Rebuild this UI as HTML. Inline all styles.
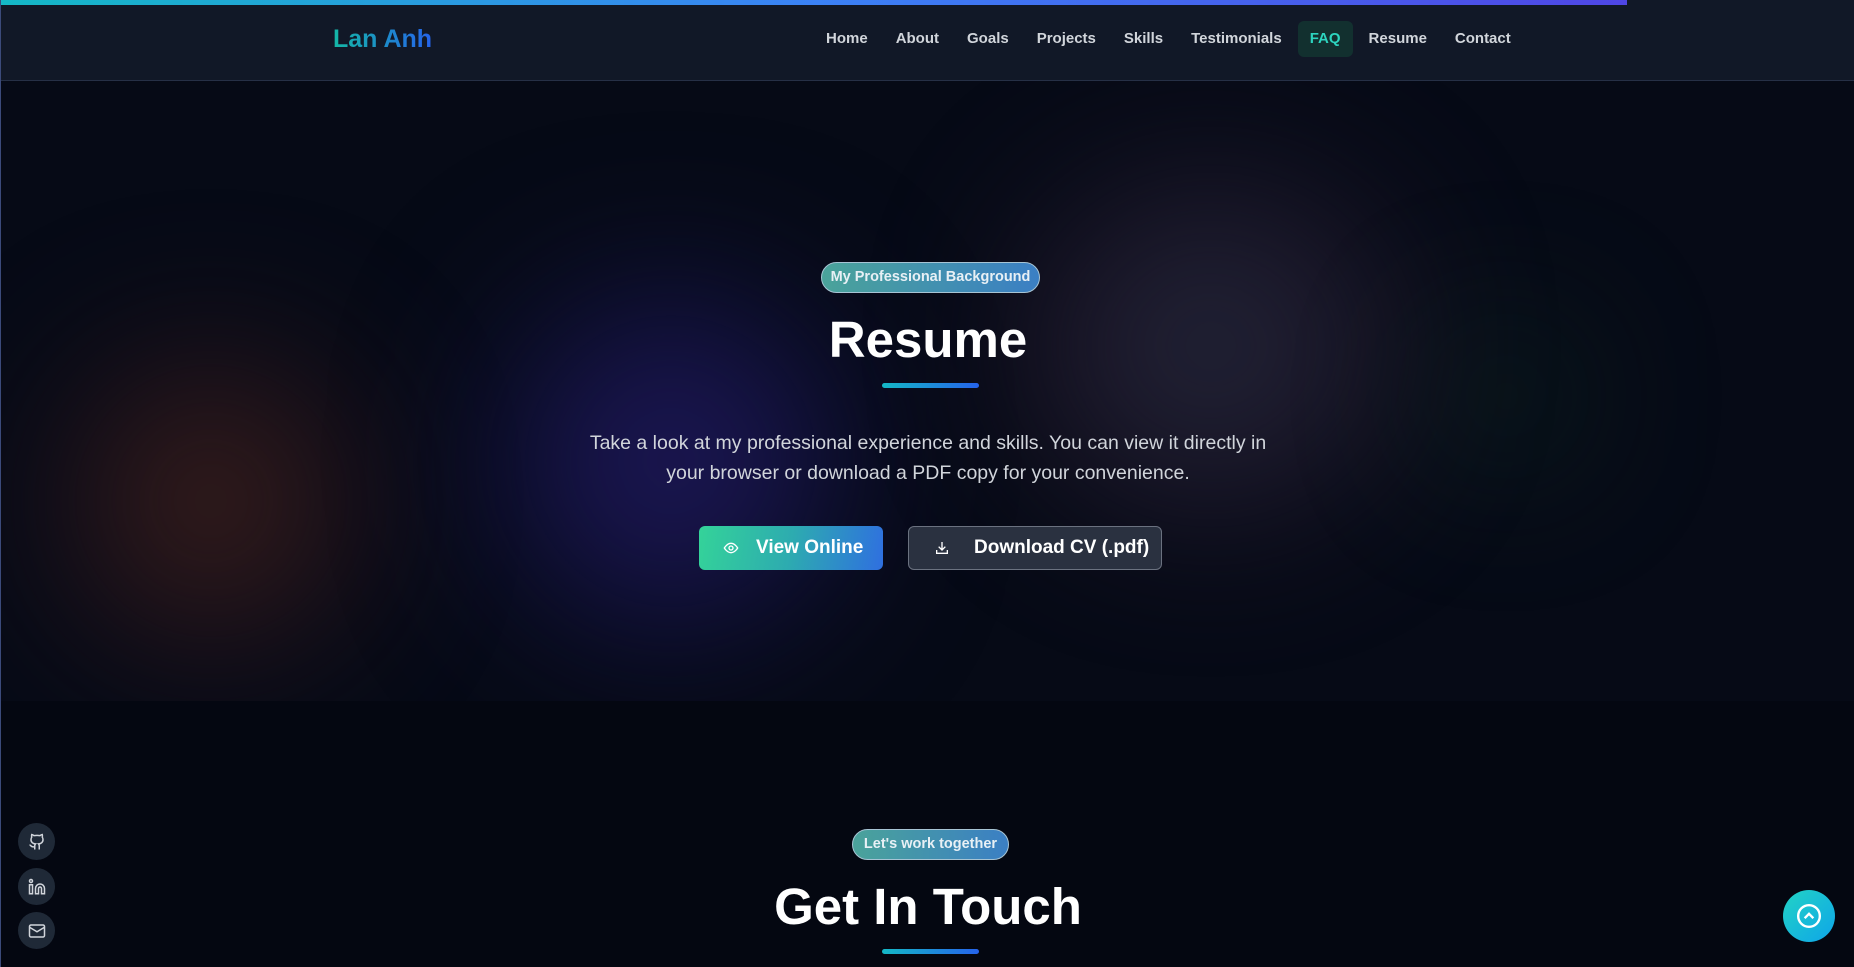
<!DOCTYPE html>
<html><head><meta charset="utf-8"><style>
*{margin:0;padding:0;box-sizing:border-box}
body{width:1854px;height:967px;overflow:hidden;background:#040711;font-family:"Liberation Sans",sans-serif;position:relative;border-left:1px solid #3b4a7a}
.topbar{position:absolute;left:0;top:0;width:1626px;height:5px;background:linear-gradient(90deg,#14b8c6,#3b82f6,#4f46e5);z-index:5}
nav{position:absolute;left:0;top:0;width:1854px;height:81px;background:#111827;border-bottom:1px solid #263046;z-index:4}
.logo{position:absolute;left:332px;top:25px;font-size:25px;font-weight:700;background:linear-gradient(90deg,#14b8a6,#2563eb);-webkit-background-clip:text;color:transparent}
.links{position:absolute;top:21px;left:811px;display:flex;height:36px;align-items:center}
.links a{color:#d1d5db;font-size:15px;font-weight:700;padding:0 14px;height:36px;line-height:36px;border-radius:6px;text-decoration:none}
.links a.act{background:#12302f;color:#2dd4bf;padding:0 12px;margin:0 2px}
.hero{position:absolute;left:0;top:81px;width:1854px;height:620px;overflow:hidden}
.blob{position:absolute;border-radius:50%;filter:blur(80px)}
.badge{position:absolute;height:31px;border:1px solid #a7c4d4;border-radius:16px;background:linear-gradient(90deg,#4aa39a,#3b7fc4);color:#e8f0f5;font-size:14.5px;font-weight:700;text-align:center;line-height:29px}
h1{position:absolute;width:1854px;left:0;text-align:center;color:#fff;font-size:51px;font-weight:700}
.ul{position:absolute;left:881px;width:97px;height:5px;border-radius:3px;background:linear-gradient(90deg,#14b8c6,#2563eb)}
p{position:absolute;left:0;width:1854px;top:428px;text-align:center;color:#d1d5db;font-size:19.5px;line-height:30px}
.btn{position:absolute;top:526px;height:44px;border-radius:6px;font-size:19px;font-weight:700;color:#fff;display:flex;align-items:center}
.soc{position:absolute;left:17px;width:37px;height:37px;border-radius:50%;background:#1f2937;display:flex;align-items:center;justify-content:center}
</style></head><body>
<div class="hero">
<div style="position:absolute;left:0;top:0;width:1854px;height:620px;background:#060a16"></div>
<div class="blob" style="left:60px;top:270px;width:300px;height:300px;background:radial-gradient(circle,#4a2a14,#2a1420 60%,transparent);opacity:.9"></div>
<div class="blob" style="left:500px;top:210px;width:340px;height:340px;background:radial-gradient(circle,#221a5a,#15134a 60%,transparent)"></div>
<div class="blob" style="left:1020px;top:100px;width:380px;height:330px;background:radial-gradient(circle,#1a2e3e,#2a1a30 60%,transparent);opacity:.9"></div>
<div class="blob" style="left:1430px;top:240px;width:150px;height:150px;background:radial-gradient(circle,#123a2a,transparent);opacity:.8"></div>
</div>
<div class="topbar"></div>
<nav><div class="logo">Lan Anh</div>
<div class="links"><a>Home</a><a>About</a><a>Goals</a><a>Projects</a><a>Skills</a><a>Testimonials</a><a class="act">FAQ</a><a>Resume</a><a>Contact</a></div></nav>
<div class="badge" style="left:820px;top:262px;width:219px">My Professional Background</div>
<h1 style="top:310px">Resume</h1>
<div class="ul" style="top:383px"></div>
<p>Take a look at my professional experience and skills. You can view it directly in<br>your browser or download a PDF copy for your convenience.</p>
<div class="btn" style="left:698px;width:184px;background:linear-gradient(100deg,#34d399,#2dabb0 50%,#2f6fe0)">
<svg style="margin-left:24px" width="16" height="16" viewBox="0 0 24 24" fill="none" stroke="#fff" stroke-width="2"><path d="M2 12s4-7 10-7 10 7 10 7-4 7-10 7S2 12 2 12z"/><circle cx="12" cy="12" r="3"/></svg>
<span style="margin-left:17px">View Online</span></div>
<div class="btn" style="left:907px;width:254px;background:#2a3140;border:1px solid #6b7280">
<svg style="margin-left:25px" width="16" height="16" viewBox="0 0 24 24" fill="none" stroke="#fff" stroke-width="2"><path d="M4 15v5h16v-5M12 3v12M7 10l5 5 5-5"/></svg>
<span style="margin-left:24px">Download CV (.pdf)</span></div>
<div class="badge" style="left:851px;top:829px;width:157px">Let's work together</div>
<h1 style="top:877px">Get In Touch</h1>
<div class="ul" style="top:949px"></div>
<div class="soc" style="top:823px"><svg width="18" height="18" viewBox="0 0 24 24" fill="none" stroke="#d1d5db" stroke-width="2"><path d="M15 22v-4a4.8 4.8 0 0 0-1-3.5c3 0 6-2 6-5.5.08-1.25-.27-2.48-1-3.5.28-1.15.28-2.35 0-3.5 0 0-1 0-3 1.5-2.64-.5-5.36-.5-8 0C6 2 5 2 5 2c-.3 1.15-.3 2.35 0 3.5A5.4 5.4 0 0 0 4 9c0 3.5 3 5.5 6 5.5-.39.49-.68 1.05-.85 1.65S8.93 17.38 9 18v4"/><path d="M9 18c-4.51 2-5-2-7-2"/></svg></div>
<div class="soc" style="top:868px"><svg width="18" height="18" viewBox="0 0 24 24" fill="none" stroke="#d1d5db" stroke-width="2"><path d="M16 8a6 6 0 0 1 6 6v7h-4v-7a2 2 0 0 0-4 0v7h-4v-7a6 6 0 0 1 6-6zM2 9h4v12H2z"/><circle cx="4" cy="4" r="2"/></svg></div>
<div class="soc" style="top:912px"><svg width="18" height="18" viewBox="0 0 24 24" fill="none" stroke="#d1d5db" stroke-width="2"><rect x="2" y="4" width="20" height="16" rx="2"/><path d="M22 7l-10 6L2 7"/></svg></div>
<div style="position:absolute;left:1782px;top:890px;width:52px;height:52px;border-radius:50%;background:linear-gradient(135deg,#22d3c5,#0ea5e9);display:flex;align-items:center;justify-content:center"><svg width="26" height="26" viewBox="0 0 24 24" fill="none" stroke="#fff" stroke-width="2.2"><circle cx="12" cy="12" r="10"/><path d="M8 14l4-4 4 4"/></svg></div>
</body></html>
